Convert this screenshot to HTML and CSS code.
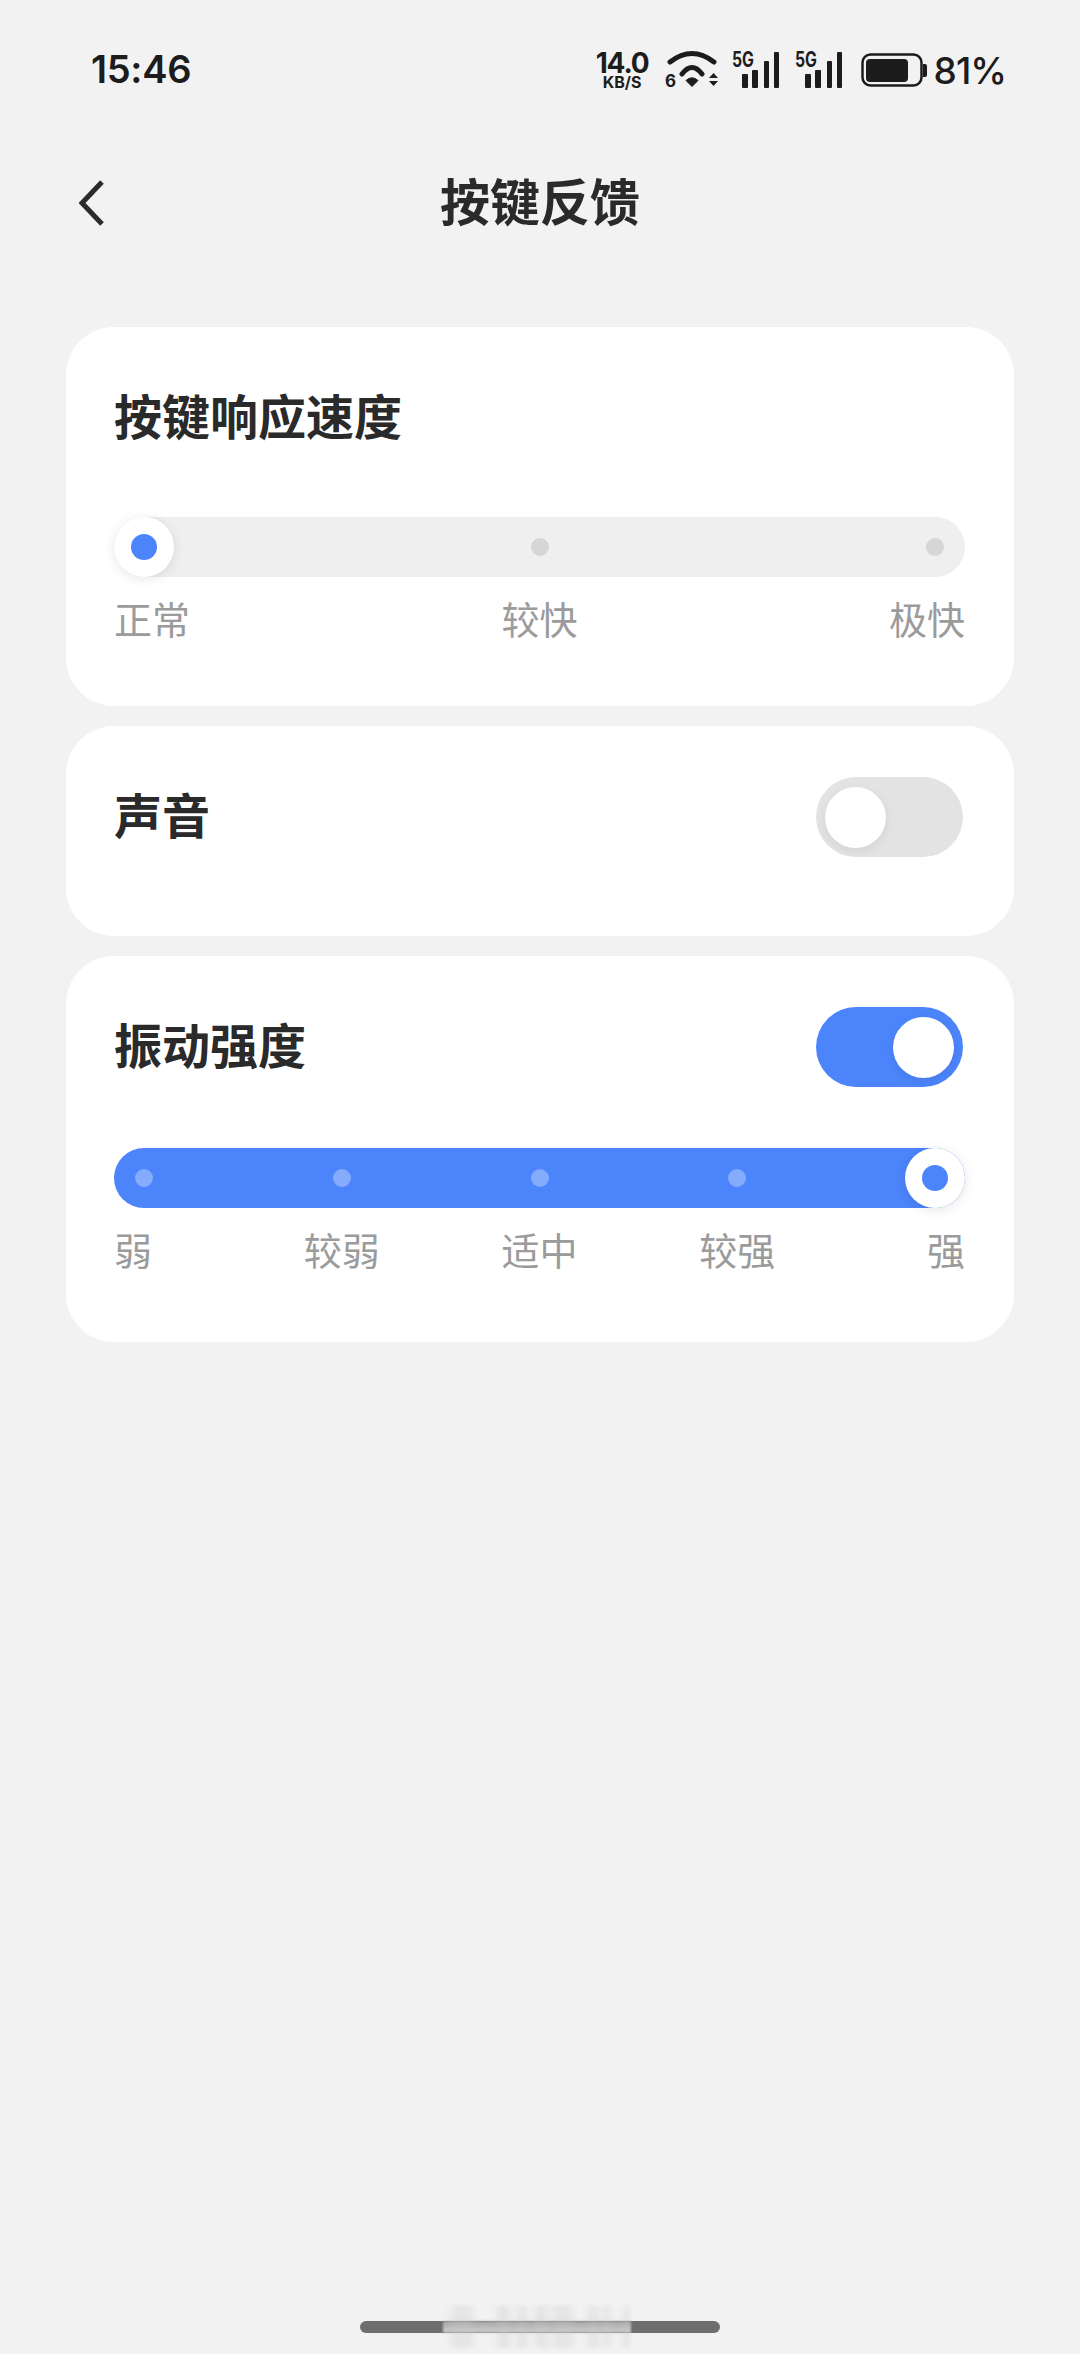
FILE: index.html
```html
<!DOCTYPE html>
<html lang="zh-CN">
<head>
    <meta charset="UTF-8">
    <meta name="viewport" content="width=device-width, initial-scale=1.0">
    <title>按键反馈</title>
    <link rel="stylesheet" href="styles.css">
</head>
<body>
    <div class="status-bar">
        <span class="time">15:46</span>
        <div class="status-icons">
            <div class="net-speed">
                <span class="net-value">14.0</span>
                <span class="net-unit">KB/S</span>
            </div>
            <svg class="wifi" width="55" height="42" viewBox="0 0 55 42">
                <path d="M7 13Q29 -4 51 13M19 25Q29 12 39 25" fill="none" stroke="#1c1c1c" stroke-width="5" stroke-linecap="round"/>
                <path d="M23 31.5Q29 26 35 31.5L29 37.5Z" fill="#1c1c1c" stroke="#1c1c1c" stroke-width="1" stroke-linejoin="round"/>
                <text x="2" y="38" class="svg-six">6</text>
                <path d="M46 29H55L50.5 24ZM46 32H55L50.5 37Z" fill="#1c1c1c"/>
            </svg>
            <svg class="signal" width="47" height="46" viewBox="0 -4 47 46">
                <text x="0" y="16" class="svg-5g" textLength="22" lengthAdjust="spacingAndGlyphs">5G</text>
                <rect x="10" y="23" width="6" height="14" rx="1" fill="#1c1c1c"/>
                <rect x="20" y="19" width="6" height="18" rx="1" fill="#1c1c1c"/>
                <rect x="32" y="10" width="5" height="27" rx="1" fill="#1c1c1c"/>
                <rect x="42" y="1" width="5" height="36" rx="1" fill="#1c1c1c"/>
            </svg>
            <svg class="signal signal-second" width="47" height="46" viewBox="0 -4 47 46">
                <text x="0" y="16" class="svg-5g" textLength="22" lengthAdjust="spacingAndGlyphs">5G</text>
                <rect x="10" y="23" width="6" height="14" rx="1" fill="#1c1c1c"/>
                <rect x="20" y="19" width="6" height="18" rx="1" fill="#1c1c1c"/>
                <rect x="32" y="10" width="5" height="27" rx="1" fill="#1c1c1c"/>
                <rect x="42" y="1" width="5" height="36" rx="1" fill="#1c1c1c"/>
            </svg>
            <svg class="battery" width="66" height="35" viewBox="0 0 66 35">
                <rect x="1.5" y="1.5" width="59" height="31" rx="8" fill="none" stroke="#1c1c1c" stroke-width="2.5"/>
                <rect x="5" y="6" width="42" height="23" rx="4" fill="#1c1c1c"/>
                <path d="M62 11H64Q66 11 66 13V22Q66 24 64 24H62Z" fill="#1c1c1c"/>
            </svg>
            <span class="battery-text">81%</span>
        </div>
    </div>

    <div class="nav-bar">
        <svg class="back" width="26" height="46" viewBox="0 0 26 46">
            <path d="M23 2L3 23L23 44" fill="none" stroke="#2b2b2b" stroke-width="5"/>
        </svg>
        <h1 class="nav-title">按键反馈</h1>
    </div>

    <div class="card-list">
        <div class="card card-speed">
            <div class="row">
                <span class="card-title">按键响应速度</span>
            </div>
            <div class="track">
                <span class="stop stop-active"><i class="dot"></i></span>
                <span class="stop"><i class="dot"></i></span>
                <span class="stop"><i class="dot"></i></span>
            </div>
            <div class="labels">
                <span class="label">正常</span>
                <span class="label">较快</span>
                <span class="label">极快</span>
            </div>
        </div>

        <div class="card card-sound">
            <div class="row">
                <span class="card-title">声音</span>
                <span class="switch"><i class="knob"></i></span>
            </div>
        </div>

        <div class="card card-vibrate">
            <div class="row">
                <span class="card-title">振动强度</span>
                <span class="switch switch-on"><i class="knob"></i></span>
            </div>
            <div class="track track-on">
                <span class="stop"><i class="dot"></i></span>
                <span class="stop"><i class="dot"></i></span>
                <span class="stop"><i class="dot"></i></span>
                <span class="stop"><i class="dot"></i></span>
                <span class="stop stop-active"><i class="dot"></i></span>
            </div>
            <div class="labels">
                <span class="label">弱</span>
                <span class="label">较弱</span>
                <span class="label">适中</span>
                <span class="label">较强</span>
                <span class="label">强</span>
            </div>
        </div>
    </div>

    <div class="home-area">
        <div class="home-bar">
            <div class="smear">
                <i class="smear-band smear-a"></i>
                <i class="smear-band smear-b"></i>
                <i class="smear-band smear-c"></i>
                <i class="smear-band smear-d"></i>
                <i class="smear-band smear-e"></i>
                <i class="smear-band smear-f"></i>
                <i class="smear-band smear-g"></i>
                <i class="smear-band smear-h"></i>
            </div>
        </div>
    </div>
</body>
</html>
```

FILE: styles.css
```css
* {
    box-sizing: border-box;
}
body {
    margin: 0;
    width: 1080px;
    height: 2354px;
    display: flex;
    flex-direction: column;
    overflow: hidden;
    background-color: #f2f2f2;
    color: #222;
    font-family: "Noto Sans CJK SC", "Noto Sans", sans-serif;
}

/* status bar */
.status-bar {
    height: 140px;
    padding: 0 74px 0 91px;
    display: flex;
    justify-content: space-between;
    align-items: center;
    color: #1c1c1c;
    font-family: Inter, "Noto Sans", sans-serif;
}
.time {
    padding-bottom: 3px;
    font-size: 38px;
    font-weight: 600;
    letter-spacing: -0.3px;
}
.status-icons {
    display: flex;
    align-items: center;
}
.net-speed {
    display: flex;
    flex-direction: column;
    align-items: center;
    width: 53px;
    font-weight: 700;
}
.net-value {
    font-size: 28px;
    line-height: 24px;
    letter-spacing: -1.2px;
}
.net-unit {
    font-size: 16px;
    line-height: 14px;
}
.wifi {
    margin-left: 14px;
}
.signal {
    margin-left: 14px;
}
.signal-second {
    margin-left: 16px;
}
.svg-six {
    font-size: 17px;
    font-weight: 700;
    fill: #1c1c1c;
}
.svg-5g {
    font-size: 21px;
    font-weight: 700;
    fill: #1c1c1c;
}
.battery {
    margin-left: 19px;
}
.battery-text {
    margin-left: 7px;
    font-size: 37px;
    font-weight: 500;
    letter-spacing: -1px;
}

/* nav */
.nav-bar {
    height: 126px;
    display: flex;
    align-items: center;
    justify-content: center;
    position: relative;
}
.back {
    position: absolute;
    left: 79px;
    top: 40px;
}
.nav-title {
    margin: 0;
    padding-bottom: 8px;
    font-size: 50px;
    font-weight: 700;
    color: #2a2a2a;
}

/* cards */
.card-list {
    margin-top: 61px;
    padding: 0 66px;
    display: flex;
    flex-direction: column;
    gap: 20px;
}
.card {
    background-color: #fff;
    border-radius: 48px;
    padding: 51px 51px 0 48px;
}
.card-speed {
    height: 379px;
}
.card-sound {
    height: 210px;
}
.card-vibrate {
    height: 386px;
}
.row {
    height: 80px;
    display: flex;
    align-items: center;
    justify-content: space-between;
}
.card-title {
    padding-bottom: 8px;
    font-size: 48px;
    font-weight: 700;
    color: #2a2a2a;
}

/* switch */
.switch {
    width: 147px;
    height: 80px;
    padding: 0 9px;
    border-radius: 40px;
    background-color: #e3e3e3;
    display: flex;
    align-items: center;
}
.switch-on {
    background-color: #4b84fb;
    justify-content: flex-end;
}
.knob {
    width: 61px;
    height: 61px;
    border-radius: 50%;
    background-color: #fff;
    box-shadow: 0 3px 10px rgba(0, 0, 0, 0.08);
}

/* slider */
.track {
    height: 60px;
    margin: 59px -2px 0 0;
    border-radius: 30px;
    background-color: #efefef;
    display: flex;
    justify-content: space-between;
}
.track-on {
    margin-top: 61px;
    background-color: #4b84fb;
}
.stop {
    width: 60px;
    height: 60px;
    border-radius: 50%;
    display: flex;
    align-items: center;
    justify-content: center;
}
.dot {
    width: 18px;
    height: 18px;
    border-radius: 50%;
    background-color: #d6d6d6;
}
.track-on .dot {
    background-color: #85abfc;
}
.stop-active {
    background-color: #fff;
    box-shadow: 0 2px 12px rgba(0, 0, 0, 0.1);
}
.stop-active .dot,
.track-on .stop-active .dot {
    width: 26px;
    height: 26px;
    background-color: #4b84fb;
}
.labels {
    margin: 19px -2px 0 0;
    display: flex;
    justify-content: space-between;
}
.label {
    width: 60px;
    display: flex;
    justify-content: center;
    white-space: nowrap;
    font-size: 38px;
    line-height: 44px;
    color: #9b9b9b;
}
.label:first-child {
    justify-content: flex-start;
}
.label:last-child {
    justify-content: flex-end;
}

/* home indicator */
.home-area {
    margin-top: auto;
    padding: 0 360px 21px;
}
.home-bar {
    height: 12px;
    border-radius: 6px;
    background-color: #6e6e6e;
    position: relative;
}
.smear {
    position: absolute;
    left: 83px;
    top: -16px;
    width: 188px;
    height: 44px;
    background: linear-gradient(to bottom, transparent 36%, #a9a9a9 38%, #cdcdcd 62%, transparent 64%);
    filter: blur(1px);
    overflow: hidden;
}
.smear-band {
    position: absolute;
    top: 0;
    height: 100%;
    background-color: rgba(200, 200, 200, 0.3);
    filter: blur(3px);
}
.smear-a { left: 8px; width: 22px; }
.smear-b { left: 54px; width: 13px; }
.smear-c { left: 74px; width: 10px; }
.smear-d { left: 92px; width: 13px; }
.smear-e { left: 110px; width: 20px; }
.smear-f { left: 145px; width: 10px; }
.smear-g { left: 160px; width: 7px; }
.smear-h { left: 180px; width: 7px; }
```
